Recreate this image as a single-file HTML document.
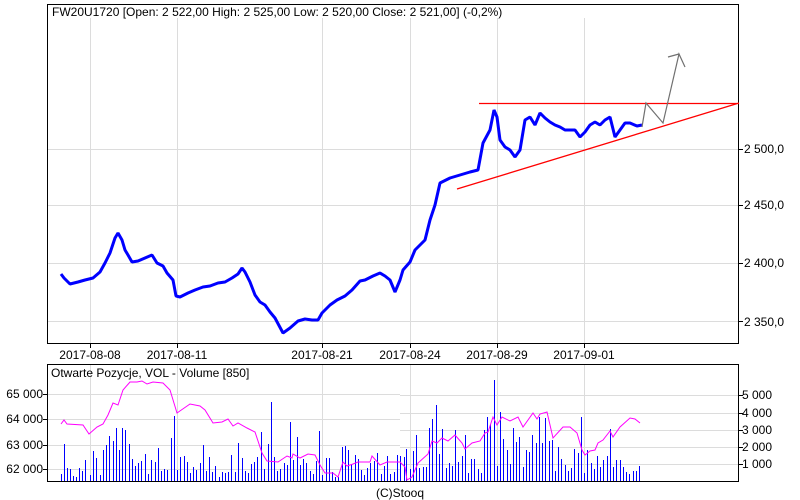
<!DOCTYPE html>
<html><head><meta charset="utf-8"><style>
html,body{margin:0;padding:0;background:#fff;width:800px;height:500px;overflow:hidden}
svg{display:block;font-family:"Liberation Sans",Arial,sans-serif;font-size:12px}
</style></head><body>
<svg width="800" height="500" viewBox="0 0 800 500" xmlns="http://www.w3.org/2000/svg">
<g stroke="#dcdcdc" stroke-width="1" fill="none" shape-rendering="crispEdges">
<path d="M90.5 18V344M177.5 18V344M322.5 18V344M410.5 18V344M497.5 18V344M584.5 18V344"/>
<path d="M48 149.5H739M48 205.5H739M48 263.5H739M48 321.5H739"/>
<path d="M90.5 364V482M177.5 364V482M322.5 364V482M410.5 364V482M497.5 364V482M584.5 364V482"/>
<path d="M48 394.5H400M48 419.5H400M48 445.5H400M48 469.5H400"/>
<path d="M400 395.5H739M400 413.5H739M400 430.5H739M400 447.5H739M400 464.5H739"/>
</g>
<g shape-rendering="crispEdges">
<rect x="47.5" y="4.5" width="691" height="339" fill="none" stroke="#000"/>
<rect x="47.5" y="364.5" width="691" height="117" fill="none" stroke="#000"/>
<path d="M90.5 344V348M177.5 344V348M322.5 344V348M410.5 344V348M497.5 344V348M584.5 344V348M739 149.5H743M739 205.5H743M739 263.5H743M739 321.5H743M739 395.5H743M739 413.5H743M739 430.5H743M739 447.5H743M739 464.5H743M43 394.5H47M43 419.5H47M43 445.5H47M43 469.5H47" stroke="#000"/>
</g>
<text x="52" y="16">FW20U1720 [Open: 2 522,00  High: 2 525,00  Low: 2 520,00  Close: 2 521,00] (-0,2%)</text>
<g text-anchor="middle"><text x="90" y="359">2017-08-08</text><text x="177" y="359">2017-08-11</text><text x="322" y="359">2017-08-21</text><text x="410" y="359">2017-08-24</text><text x="497" y="359">2017-08-29</text><text x="584" y="359">2017-09-01</text><text x="400" y="497">(C)Stooq</text></g>
<g><text x="744" y="153">2 500,0</text><text x="744" y="209">2 450,0</text><text x="744" y="267">2 400,0</text><text x="744" y="326">2 350,0</text>
<text x="742" y="399">5 000</text><text x="742" y="417">4 000</text><text x="742" y="434">3 000</text><text x="742" y="451">2 000</text><text x="742" y="468">1 000</text></g>
<g text-anchor="end"><text x="43" y="398">65 000</text><text x="43" y="423">64 000</text><text x="43" y="449">63 000</text><text x="43" y="473">62 000</text></g>
<text x="51" y="377">Otwarte Pozycje, VOL - Volume [850]</text>
<polyline fill="none" stroke="#0000ff" stroke-width="3" stroke-linejoin="bevel" points="61,274 64,278 70,284 78,282 85,280 93,278 100,272 105,263 110,253 115,238 118,233 122,240 125,250 128,255 132,262 138,261 145,258 152,255 157,263 163,266 167,273 173,280 176,296 180,297 188,293 195,290 203,287 210,286 218,283 225,282 232,278 238,274 242,268 245,272 250,282 255,295 260,302 265,305 270,312 275,318 283,333 290,328 298,321 305,319 312,320 318,320 322,313 330,305 337,300 345,296 352,290 360,281 365,280 373,276 380,273 385,276 390,280 395,292 400,280 403,270 410,262 415,250 420,245 425,240 430,220 435,205 440,183 450,178 460,175 470,172 478,170 483,143 490,130 494,110 497,117 500,140 505,147 510,150 515,157 520,150 525,120 530,117 535,125 540,113 545,118 550,122 555,125 560,127 565,130 575,130 580,137 585,132 590,125 595,122 600,125 605,120 610,117 615,137 620,130 625,123 630,123 637,126 642,125"/>
<path d="M479 103.5H739M457 189L739 103" stroke="#ff0000" stroke-width="1.3" fill="none"/>
<path d="M642 127L646 103L663 123L679 54L685 67M668 57L679 54" stroke="#707070" stroke-width="1.2" fill="none"/>
<g transform="translate(0.5,0)" shape-rendering="crispEdges">
<path stroke="#0000ff" stroke-width="1" fill="none" d="M61 481V474M64 481V444M67 481V468M70 481V469M73 481V476M76 481V477M79 481V468M82 481V471M85 481V460M90 481V475M93 481V451M96 481V458M100 481V475M103 481V450M106 481V445M109 481V436M113 481V441M116 481V428M119 481V450M122 481V428M125 481V430M129 481V444M132 481V459M135 481V466M138 481V463M141 481V461M145 481V454M148 481V474M151 481V460M155 481V462M158 481V448M161 481V471M164 481V469M167 481V470M171 481V438M174 481V416M177 481V470M180 481V457M184 481V456M187 481V462M190 481V473M193 481V467M196 481V470M200 481V463M203 481V445M206 481V471M209 481V457M212 481V472M215 481V466M219 481V477M222 481V472M225 481V473M228 481V472M231 481V455M235 481V472M238 481V443M242 481V458M245 481V471M248 481V473M251 481V464M254 481V462M257 481V457M261 481V432M264 481V469M268 481V444M271 481V402M274 481V457M277 481V471M280 481V469M284 481V463M287 481V465M290 481V422M293 481V460M297 481V437M300 481V465M303 481V459M306 481V463M310 481V471M313 481V474M316 481V461M319 481V431M322 481V475M326 481V458M329 481V458M332 481V472M335 481V477M338 481V477M342 481V447M345 481V446M348 481V450M351 481V464M355 481V455M358 481V459M361 481V470M364 481V475M367 481V468M370 481V463M374 481V461M377 481V453M381 481V474M384 481V466M387 481V456M390 481V474M394 481V472M397 481V455M400 481V456M404 481V457M406 481V449M410 481V469M413 481V451M416 481V435M419 481V468M423 481V467M426 481V467M429 481V428M432 481V419M436 481V405M439 481V454M442 481V429M446 481V468M449 481V463M452 481V466M455 481V430M458 481V462M462 481V456M465 481V435M468 481V473M471 481V459M474 481V459M478 481V469M481 481V473M484 481V430M487 481V417M490 481V424M494 481V380M497 481V466M500 481V412M503 481V439M507 481V450M510 481V464M513 481V428M516 481V442M519 481V437M523 481V467M526 481V450M529 481V452M532 481V435M536 481V443M539 481V417M542 481V443M545 481V418M549 481V441M552 481V440M555 481V471M558 481V447M561 481V459M565 481V465M568 481V471M571 481V468M574 481V449M578 481V453M581 481V417M584 481V473M587 481V450M591 481V463M594 481V469M597 481V456M600 481V467M603 481V460M607 481V456M610 481V429M613 481V467M616 481V460M620 481V460M623 481V467M626 481V472M629 481V474M633 481V471M636 481V471M639 481V466"/>
</g>
<polyline fill="none" stroke="#ff00ff" stroke-width="1" points="61,424 64,420 67,424 83,425 89,434 97,427 103,424 108,415 113,403 118,405 123,390 130,382 137,382 142,381 147,384 153,382 163,383 170,390 177,413 190,404 200,406 205,410 213,423 222,422 228,419 233,426 238,423 247,428 255,432 262,453 267,461 278,462 287,456 292,458 293,454 300,458 308,454 315,455 320,465 325,473 333,473 338,477 343,462 347,466 353,464 358,462 370,462 372,456 380,465 387,462 400,462 405,467 407,480 412,477 418,463 428,454 432,441 437,443 442,438 448,441 455,435 462,443 465,449 472,443 480,441 485,433 488,432 493,417 497,425 502,417 510,421 518,417 523,427 533,413 537,419 540,414 547,412 553,438 563,427 570,427 577,433 582,450 585,455 590,451 595,450 598,443 603,440 610,431 613,437 620,427 630,418 635,419 640,423"/>
</svg>
</body></html>
